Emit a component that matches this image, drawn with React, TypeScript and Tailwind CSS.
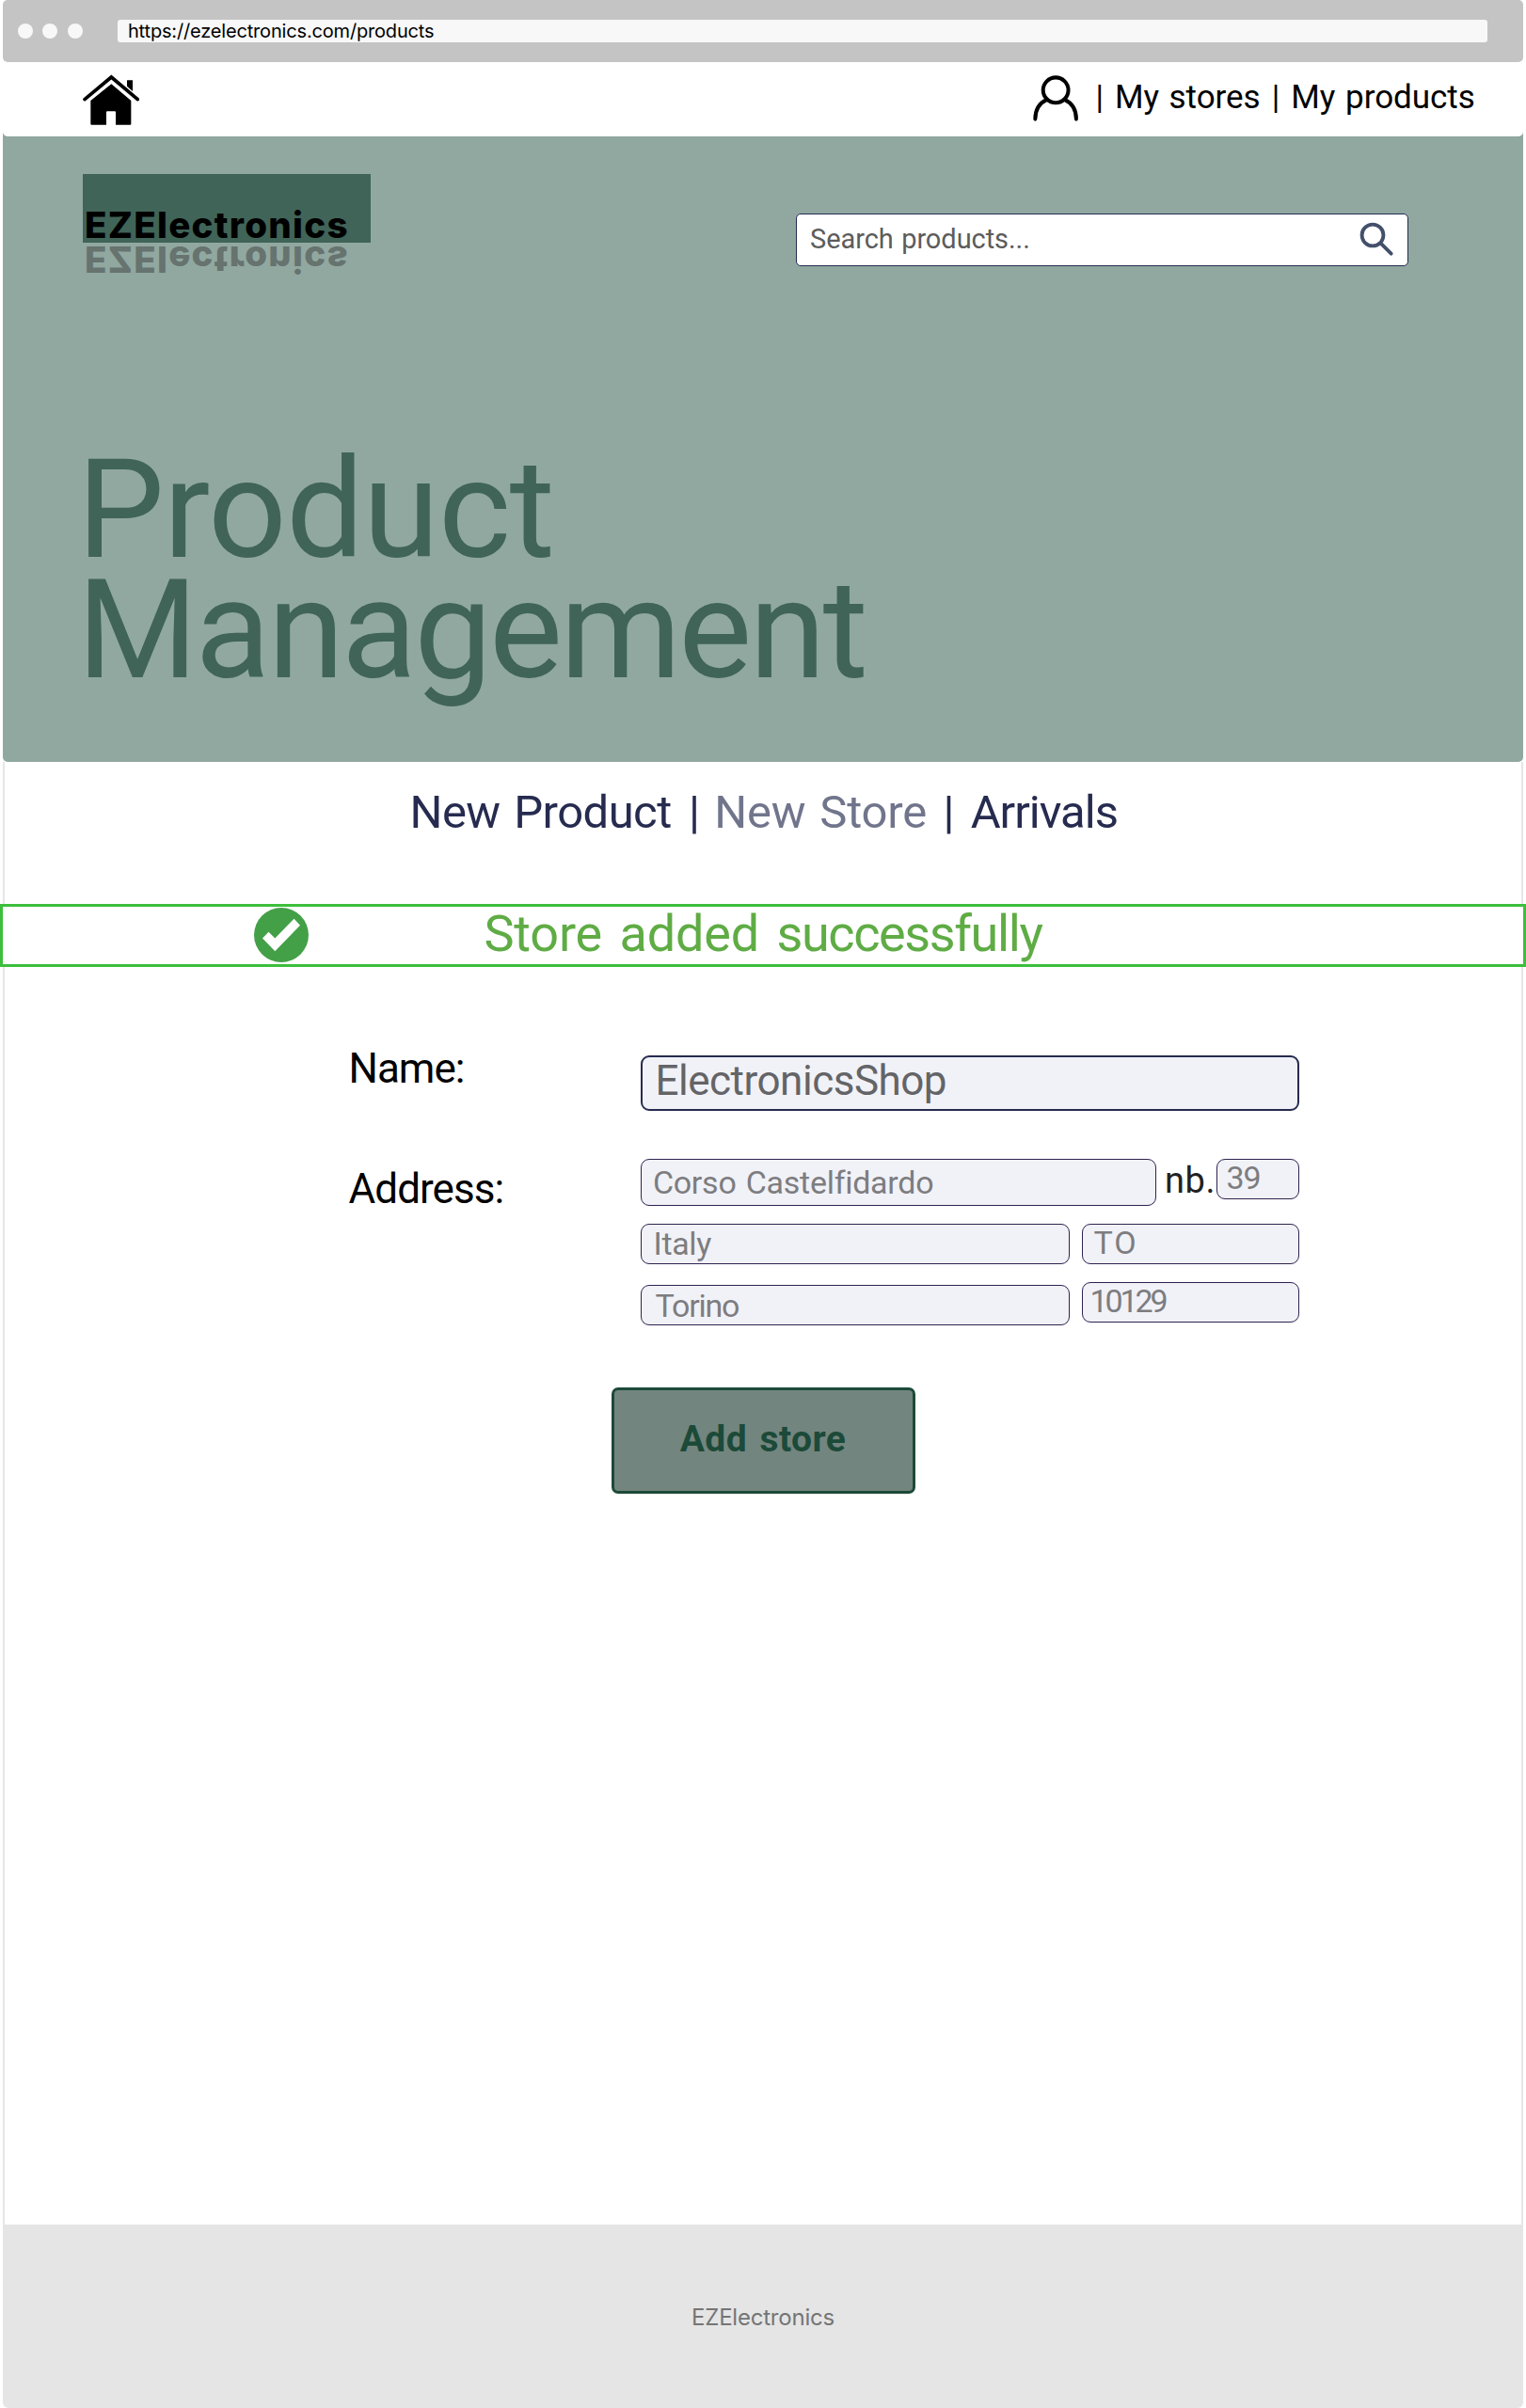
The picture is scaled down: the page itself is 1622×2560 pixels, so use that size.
import React from "react";

function HomeIcon() {
  return (
    <svg viewBox="24 26 180 162" className="mt-[13px] h-[54px] w-[60px]" aria-label="Home">
      <path d="M30 106 L115 35 L199 106" fill="none" stroke="#000" strokeWidth="11" strokeLinecap="round" strokeLinejoin="miter" />
      <path d="M165 45 H183 V80 L165 64 Z" />
      <path d="M49 110 L115 57 L178 110 V184 Q178 187 175 187 H129 V147 Q129 144 126 144 H102 Q99 144 99 147 V187 H52 Q49 187 49 184 Z" />
    </svg>
  );
}

function UserIcon() {
  return (
    <svg viewBox="40 32 145 146" className="mt-[14px] h-[49px] w-[48.6px]" fill="none" stroke="#000" strokeWidth="12" strokeLinecap="round" aria-label="Account">
      <circle cx="112" cy="79" r="40" />
      <path d="M47 171 C47 143 60 120 84 109" />
      <path d="M177 171 C177 143 164 120 140 109" />
    </svg>
  );
}

function SearchIcon() {
  return (
    <svg viewBox="45 33 110 110" className="mt-[8px] mr-[14px] h-[36.7px] w-[36.7px]" fill="none" stroke="#43506b" strokeWidth="11.5" aria-label="Search">
      <circle cx="87" cy="75" r="34.3" />
      <path d="M112 100 L146 134" strokeLinecap="round" />
    </svg>
  );
}

function CheckIcon() {
  return (
    <svg viewBox="0 0 58 58" className="mt-px ml-[267px] h-[58px] w-[58px]" aria-hidden="true">
      <circle cx="29" cy="29" r="29" fill="#43a047" />
      <path d="M9 32.5 L15.5 25.8 L22.3 32.5 L42.5 11.8 L49 18.7 L22.3 46.3 Z" fill="#fff" />
    </svg>
  );
}

const field = "rounded-[9px] border border-[#2f2350] bg-[#f1f2f8] text-[34px] text-[#7d7d80]";

export default function App() {
  return (
    <div className="flex h-[2560px] w-full flex-col bg-white font-['Roboto',sans-serif] whitespace-nowrap">
      <header className="relative z-10 mx-[3px] flex h-[66px] shrink-0 items-center rounded-[5px] bg-[#c4c4c4] pl-4">
        <div className="flex gap-[10.4px]">
          <span className="size-4 rounded-full bg-[#f8f8f8]" />
          <span className="size-4 rounded-full bg-[#f8f8f8]" />
          <span className="size-4 rounded-full bg-[#f8f8f8]" />
        </div>
        <div className="ml-[37.2px] h-6 w-[1456px] rounded-[3px] bg-[#f8f8f8] pl-[11px] font-['Inter',sans-serif] text-[20px] leading-6 tracking-[-0.17px]">
          https://ezelectronics.com/products
        </div>
      </header>

      <nav className="relative z-10 mx-[3px] flex h-[79px] shrink-0 justify-between rounded-[5px] bg-white pr-[51.2px] pl-[85px]">
        <HomeIcon />
        <div className="flex text-[35px] leading-[76px] text-black">
          <UserIcon />
          <span className="ml-[17.7px]">|</span>
          <span className="ml-[11.8px] tracking-[-0.05px] [word-spacing:2px]">My stores</span>
          <span className="ml-[12.1px]">|</span>
          <span className="ml-[12.1px] tracking-[-0.03px] [word-spacing:2px]">My products</span>
        </div>
      </nav>

      <section className="mx-[3px] -mt-[5px] h-[670px] shrink-0 rounded-b-[5px] bg-[#91a8a1] pt-[45px]">
        <div className="flex h-[293px] items-start justify-between pr-[122px] pl-[85px]">
          <div className="h-[73px] w-[306px] bg-[#406458] pt-[34px] pl-[2px] font-['Inter',sans-serif] text-[38.5px] leading-10 font-extrabold tracking-[1.3px]">
            <div className="text-black">EZElectronics</div>
            <div className="-mt-[3px] -scale-y-100 text-[#66736e]" aria-hidden="true">EZElectronics</div>
          </div>
          <div className="mt-[42px] flex h-[56px] w-[651px] justify-between rounded-[5px] border border-[#262b4f] bg-white pl-[14px]">
            <span className="text-[29px] leading-[52px] tracking-[-0.06px] text-[#5c5c5c] [word-spacing:1.3px]">Search products...</span>
            <SearchIcon />
          </div>
        </div>
        <h1 className="pl-[79px] text-[147px] leading-[128px] text-[#406458]">
          <span className="block tracking-[-1px]">Product</span>
          <span className="block tracking-[-2.8px]">Management</span>
        </h1>
      </section>

      <main className="mx-[3px] grow border-x-2 border-[#e6e6e6] bg-white">
        <div className="flex h-[151px] pt-[24px] pl-[430.5px] text-[49px] leading-[60px] text-[#262b4f]">
          <span className="tracking-[-0.55px] [word-spacing:3px]">New Product</span>
          <span className="ml-[18.2px]">|</span>
          <span className="ml-[15.3px] tracking-[-0.2px] text-[#71758c] [word-spacing:3px]">New Store</span>
          <span className="ml-[17.5px]">|</span>
          <span className="ml-[17.2px] tracking-[-1px]">Arrivals</span>
        </div>

        <div className="relative -mx-[5px] flex h-[67px] border-[3px] border-[#3dbf3d] bg-white">
          <CheckIcon />
          <span className="ml-[186.5px] text-[54px] leading-[57px] text-[#5fac45] [word-spacing:5.4px]">
            <span className="tracking-[-0.2px]">Store </span>
            <span className="tracking-[-0.2px]">added </span>
            <span className="tracking-[-1.4px]">successfully</span>
          </span>
        </div>

        <div className="pt-[83px] pl-[365.5px]">
          <div className="flex h-[121px]">
            <label className="w-[310px] text-[44px] leading-[50px] tracking-[-0.98px] text-black">Name:</label>
            <div className="mt-[11px] h-[59px] w-[700px] rounded-[9px] border-2 border-[#262b4f] bg-[#f1f2f8] pl-[14px] text-[44px] leading-[50px] tracking-[-0.49px] text-[#646467]">
              ElectronicsShop
            </div>
          </div>
          <div className="flex">
            <label className="mt-[7px] w-[310px] text-[44px] leading-[50px] tracking-[-0.94px] text-black">Address:</label>
            <div className="w-[700px]">
              <div className="flex h-[69px] items-start">
                <div className={`${field} h-[50px] w-[548px] pl-[12.4px] leading-[49px] tracking-[-0.27px] [word-spacing:2px]`}>Corso Castelfidardo</div>
                <span className="ml-[9.5px] w-[54.5px] text-[38px] leading-[46px] tracking-[0.6px] text-[#222]">nb.</span>
                <div className={`${field} h-[43px] w-[88px] pl-[10px] leading-[39px] tracking-[-1.1px]`}>39</div>
              </div>
              <div className="flex h-[62px] items-start justify-between">
                <div className={`${field} h-[43px] w-[456px] pl-[13px] leading-[40px] tracking-[-0.36px]`}>Italy</div>
                <div className={`${field} h-[43px] w-[231px] pl-[12px] leading-[38px] tracking-[2px]`}>TO</div>
              </div>
              <div className="flex h-[112px] items-start justify-between">
                <div className={`${field} mt-[3px] h-[43px] w-[456px] pl-[15px] leading-[42px] tracking-[-1.2px]`}>Torino</div>
                <div className={`${field} h-[43px] w-[231px] pl-[8px] leading-[39px] tracking-[-3.1px]`}>10129</div>
              </div>
            </div>
          </div>
        </div>

        <button className="mx-auto block h-[113px] w-[323px] rounded-[7px] border-[3px] border-[#1c4a38] bg-[#73857f] pb-[3px] text-[39px] leading-[103px] font-bold tracking-[0.4px] text-[#1c4a38] [word-spacing:3.5px]">
          Add store
        </button>
      </main>

      <footer className="mx-[3px] h-[195px] shrink-0 rounded-b-[6px] bg-[#e5e5e5] text-center font-['Inter',sans-serif] text-[24px] leading-[198px] tracking-[-0.22px] text-[#757575]">
        EZElectronics
      </footer>
    </div>
  );
}
